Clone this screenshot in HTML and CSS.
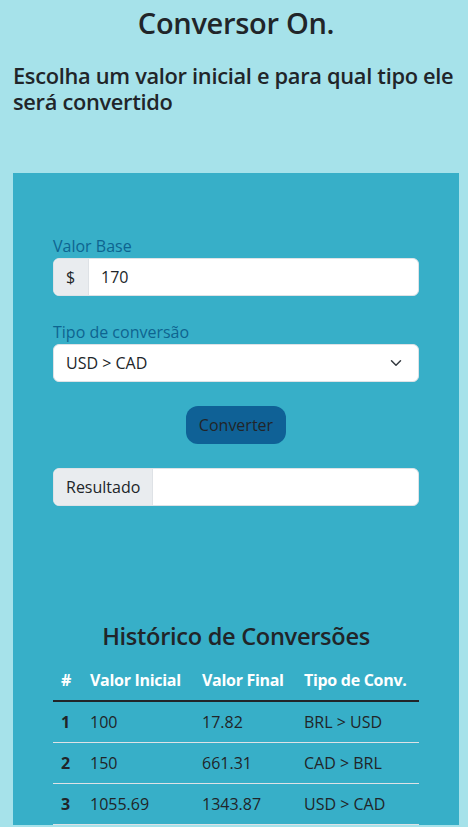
FILE: index.html
```html
<!DOCTYPE html>
<html lang="pt-BR">
<head>
<meta charset="utf-8">
<title>Conversor On.</title>
<link rel="stylesheet" href="styles.css">
</head>
<body>
<div class="page">
  <h1 class="title">Conversor On.</h1>
  <h4 class="subtitle">Escolha um valor inicial e para qual tipo ele será convertido</h4>

  <section class="panel">
    <label class="label">Valor Base</label>
    <div class="group">
      <span class="addon addon-sm">$</span>
      <span class="field">170</span>
    </div>

    <label class="label label-2">Tipo de conversão</label>
    <div class="select">
      <span>USD &gt; CAD</span>
      <svg class="chev" width="12" height="12" viewBox="0 0 16 16"><path d="M2 5l6 6 6-6" fill="none" stroke="#343a40" stroke-width="2" stroke-linecap="round" stroke-linejoin="round"/></svg>
    </div>

    <div class="btn-row"><button class="btn">Converter</button></div>

    <div class="group">
      <span class="addon">Resultado</span>
      <span class="field"></span>
    </div>

    <h3 class="hist">Histórico de Conversões</h3>
    <table class="table">
      <colgroup>
        <col class="c1"><col class="c2"><col class="c3"><col class="c4">
      </colgroup>
      <thead>
        <tr><th>#</th><th>Valor Inicial</th><th>Valor Final</th><th>Tipo de Conv.</th></tr>
      </thead>
      <tbody>
        <tr><th>1</th><td>100</td><td>17.82</td><td>BRL &gt; USD</td></tr>
        <tr><th>2</th><td>150</td><td>661.31</td><td>CAD &gt; BRL</td></tr>
        <tr><th>3</th><td>1055.69</td><td>1343.87</td><td>USD &gt; CAD</td></tr>
      </tbody>
    </table>
  </section>
</div>
</body>
</html>
```
FILE: styles.css
```css
* { box-sizing: border-box; }
html, body { margin: 0; padding: 0; }
body {
  background: #a6e2ea;
  font-family: "Open Sans", "Noto Sans", sans-serif;
  color: #212529;
  font-size: 16px;
  line-height: 1.5;
}
.page { padding: 0 9px 0 13px; }
.title {
  margin: 6px 0 0;
  text-align: center;
  font-size: 29px;
  font-weight: 600;
  line-height: 1.2;
  letter-spacing: -0.3px;
}
.subtitle {
  margin: 22px 0 0;
  font-size: 21.8px;
  font-weight: 600;
  line-height: 1.2;
  letter-spacing: -0.3px;
}
.panel {
  margin: 58px 0 0;
  width: 446px;
  background: #37afc8;
  padding: 61px 40px 0;
}
.label {
  display: block;
  color: #0e6490;
  margin-bottom: 0;
}
.label-2 { margin-top: 24px; }
.group {
  display: flex;
  height: 38px;
  border: 1px solid #dee2e6;
  border-radius: 6px;
  background: #fff;
  overflow: hidden;
}
.addon {
  display: flex;
  align-items: center;
  padding: 0 12px;
  background: #e9ecef;
  border-right: 1px solid #dee2e6;
}
.addon-sm { width: 35px; }
.field {
  flex: 1;
  display: flex;
  align-items: center;
  padding: 0 12px;
}
.select {
  display: flex;
  align-items: center;
  justify-content: space-between;
  height: 38px;
  padding: 0 16px 0 12px;
  background: #fff;
  border: 1px solid #dee2e6;
  border-radius: 6px;
}
.chev { width: 12px; height: 12px; }
.btn-row {
  display: flex;
  justify-content: center;
  margin: 24px 0 24px;
}
.btn {
  font: inherit;
  color: #212529;
  background: #0f6196;
  border: none;
  border-radius: 12px;
  height: 38px;
  padding: 0 13px;
}
.hist {
  margin: 116px 0 10px;
  text-align: center;
  font-size: 23.6px;
  font-weight: 600;
  line-height: 1.2;
  letter-spacing: -0.3px;
}
.table {
  width: 100%;
  border-collapse: collapse;
  table-layout: fixed;
}
.c1 { width: 29px; }
.c2 { width: 112px; }
.c3 { width: 102px; }
.c4 { width: 123px; }
.table th, .table td {
  text-align: left;
  padding: 8px;
  white-space: nowrap;
}
.table thead th {
  color: #fff;
  font-weight: 700;
  height: 41px;
  letter-spacing: -0.3px;
  border-bottom: 2px solid #212529;
}
.table tbody th, .table tbody td {
  height: 41px;
  border-bottom: 1px solid #dee2e6;
}
.table tbody th { font-weight: 700; }
```
